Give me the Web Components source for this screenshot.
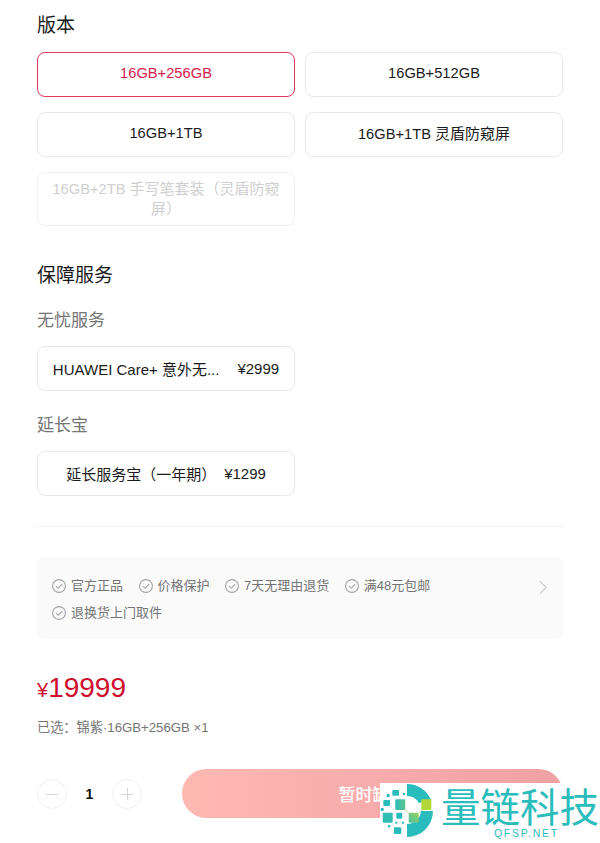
<!DOCTYPE html>
<html lang="zh">
<head>
<meta charset="utf-8">
<title>版本</title>
<style>
  html, body { margin: 0; padding: 0; background: #fff; }
  body {
    width: 600px;
    height: 843px;
    overflow: hidden;
    position: relative;
    font-family: "Liberation Sans", "Noto Sans CJK SC", sans-serif;
    color: #000;
  }
</style>
</head>
<body>
<product-panel></product-panel>
<qfsp-mark></qfsp-mark>

<script>
class OptBtn extends HTMLElement {
   constructor() {
      super();
      this.attachShadow({ mode: 'open' }).innerHTML = `
         <style>
            :host {
               display: block;
               box-sizing: border-box;
               padding: 10px 12px;
               border: 1px solid #e8e8e8;
               border-radius: 8px;
               font-size: 14.7px;
               line-height: 21px;
               text-align: center;
               color: #1a1a1a;
               background: #fff;
            }
            :host([selected]) {
               border-color: #e2395b;
               color: #d6204b;
            }
            :host([disabled]) {
               padding: 6px 12px;
               line-height: 20px;
               border-color: #f1f1f1;
               color: #cfcfcf;
            }
            ::slotted(.cn) { font-size: 15px; }
         </style>
         <slot></slot>
      `;
   }
}
customElements.define('opt-btn', OptBtn);

class ServiceBtn extends HTMLElement {
   constructor() {
      super();
      this.attachShadow({ mode: 'open' }).innerHTML = `
         <style>
            :host {
               display: flex;
               align-items: center;
               justify-content: center;
               box-sizing: border-box;
               width: 258px;
               height: 45px;
               padding: 0 15px;
               gap: var(--svc-gap, 8px);
               border: 1px solid #e8e8e8;
               border-radius: 8px;
               font-size: 15px;
               color: #1a1a1a;
               white-space: nowrap;
            }
         </style>
         <span><slot></slot></span>
         <span><slot name="price"></slot></span>
      `;
   }
}
customElements.define('service-btn', ServiceBtn);

class PromiseItem extends HTMLElement {
   constructor() {
      super();
      this.attachShadow({ mode: 'open' }).innerHTML = `
         <style>
            :host {
               display: inline-flex;
               align-items: center;
               gap: 5px;
               font-size: 13px;
               line-height: 27px;
               color: #757575;
            }
            svg { flex: none; display: block; }
         </style>
         <svg width="14" height="14" viewBox="0 0 14 14" fill="none" stroke="#a4a4a4" stroke-width="1.1">
            <circle cx="7" cy="7" r="6.4"/>
            <path d="M4 7.2 6.2 9.3 10.2 5.2"/>
         </svg>
         <slot></slot>
      `;
   }
}
customElements.define('promise-item', PromiseItem);

class PromiseBox extends HTMLElement {
   constructor() {
      super();
      this.attachShadow({ mode: 'open' }).innerHTML = `
         <style>
            :host {
               display: flex;
               align-items: center;
               box-sizing: border-box;
               height: 82px;
               padding: 0 16px 0 15px;
               background: #fafafa;
               border-radius: 8px;
            }
            .items {
               display: flex;
               flex-wrap: wrap;
               gap: 0 15.5px;
               width: 440px;
               padding-top: 2px;
            }
            .arrow { margin-left: auto; display: block; align-self: flex-start; margin-top: 23px; }
         </style>
         <div class="items"><slot></slot></div>
         <svg class="arrow" width="8" height="15" viewBox="0 0 8 15" fill="none" stroke="#cfcfcf" stroke-width="1.2">
            <path d="M1 1 7 7.5 1 14"/>
         </svg>
      `;
   }
}
customElements.define('promise-box', PromiseBox);

class QtyStepper extends HTMLElement {
   constructor() {
      super();
      this.attachShadow({ mode: 'open' }).innerHTML = `
         <style>
            :host {
               display: flex;
               align-items: center;
               width: 105px;
               justify-content: space-between;
            }
            .round {
               width: 30px;
               height: 30px;
               box-sizing: border-box;
               border: 1px solid #f0f0f0;
               border-radius: 50%;
               display: flex;
               align-items: center;
               justify-content: center;
            }
            .num { font-size: 14px; font-weight: 700; color: #111; }
         </style>
         <div class="round">
            <svg width="12" height="12" viewBox="0 0 12 12" stroke="#d4d4d4"><path d="M0 6.5H12"/></svg>
         </div>
         <span class="num">1</span>
         <div class="round">
            <svg width="12" height="12" viewBox="0 0 12 12" stroke="#d4d4d4"><path d="M0 6.5H12M6.5 0V12"/></svg>
         </div>
      `;
   }
}
customElements.define('qty-stepper', QtyStepper);

class ProductPanel extends HTMLElement {
   constructor() {
      super();
      this.attachShadow({ mode: 'open' }).innerHTML = `
         <style>
            :host {
               display: block;
               padding: 12px 37px 0;
            }
            h2 {
               margin: 0;
               font-size: 19px;
               line-height: 28px;
               font-weight: 400;
               color: #1a1a1a;
            }
            h3 {
               margin: 0;
               font-size: 17px;
               line-height: 24px;
               font-weight: 400;
               color: #757575;
            }
            .cn { font-size: 15px; }
            .grid {
               display: grid;
               grid-template-columns: 258px 258px;
               grid-template-rows: 45px 45px 54px;
               gap: 15px 10px;
               margin-top: 12px;
            }
            .guarantee { margin-top: 36px; }
            .sub1 { margin-top: 19px; }
            .sub2 { margin-top: 23px; }
            service-btn { margin-top: 13px; }
            hr {
               border: 0;
               border-top: 1px solid #f2f2f2;
               margin: 30px 0 30px;
            }
            .price {
               margin-top: 31px;
               color: #ce0e2d;
               font-size: 28px;
               line-height: 36px;
            }
            .price small { font-size: 20px; }
            .picked {
               margin-top: 10px;
               font-size: 13.2px;
               line-height: 20px;
               color: #757575;
            }
            .buy {
               display: flex;
               align-items: center;
               justify-content: space-between;
               margin-top: 31px;
            }
            .buy-btn {
               width: 381px;
               height: 49px;
               border-radius: 25px;
               display: flex;
               align-items: center;
               justify-content: center;
               font-size: 17px;
               font-weight: 500;
               color: #fff;
               background: linear-gradient(90deg, #ffb9b3, #efa0a3);
            }
         </style>
         <h2>版本</h2>
         <div class="grid">
            <opt-btn selected>16GB+256GB</opt-btn>
            <opt-btn>16GB+512GB</opt-btn>
            <opt-btn>16GB+1TB</opt-btn>
            <opt-btn>16GB+1TB <span class="cn">灵盾防窥屏</span></opt-btn>
            <opt-btn disabled>16GB+2TB <span class="cn">手写笔套装（灵盾防窥屏）</span></opt-btn>
         </div>
         <h2 class="guarantee">保障服务</h2>
         <h3 class="sub1">无忧服务</h3>
         <service-btn style="--svc-gap: 18px">HUAWEI Care+ 意外无...<span slot="price">¥2999</span></service-btn>
         <h3 class="sub2">延长宝</h3>
         <service-btn>延长服务宝（一年期）<span slot="price">¥1299</span></service-btn>
         <hr>
         <promise-box>
            <promise-item>官方正品</promise-item>
            <promise-item>价格保护</promise-item>
            <promise-item>7天无理由退货</promise-item>
            <promise-item>满48元包邮</promise-item>
            <promise-item>退换货上门取件</promise-item>
         </promise-box>
         <div class="price"><small>¥</small>19999</div>
         <div class="picked">已选：锦紫·16GB+256GB ×1</div>
         <div class="buy">
            <qty-stepper></qty-stepper>
            <div class="buy-btn">暂时缺货</div>
         </div>
      `;
   }
}
customElements.define('product-panel', ProductPanel);

// watermark sits over the buy button
class QfspMark extends HTMLElement {
   constructor() {
      super();
      this.attachShadow({ mode: 'open' }).innerHTML = `
         <style>
            :host {
               position: absolute;
               left: 380px;
               top: 783px;
               width: 220px;
               height: 60px;
               background: #fff;
               display: flex;
               gap: 6px;
            }
            svg { flex: none; display: block; }
            .txt { color: #2bbcbc; width: 159px; padding-top: 2px; }
            .cn {
               font-family: "Noto Sans CJK SC", sans-serif;
               font-size: 39.5px;
               line-height: 40px;
               white-space: nowrap;
            }
            .en {
               font-size: 10.5px;
               line-height: 11px;
               letter-spacing: 1.7px;
               margin-top: 3px;
               padding-left: 53px;
            }
         </style>
         <svg width="55" height="60" viewBox="0 0 55 60">
            <defs>
               <linearGradient id="g1" x1="0" y1="1" x2="1" y2="0">
                  <stop offset="0" stop-color="#4cc2a0"/>
                  <stop offset="1" stop-color="#9ad15c"/>
               </linearGradient>
               <linearGradient id="g2" x1="0" y1="0" x2="1" y2="0">
                  <stop offset="0" stop-color="#2cbdb8"/>
                  <stop offset="1" stop-color="#5cc58f"/>
               </linearGradient>
            </defs>
            <path d="M27 1A26 26 0 0 1 51 17L39 20A14 14 0 0 0 27 13Z" fill="#29bcbc"/>
            <path d="M53 28A26 26 0 0 1 27 54L27 41A14 14 0 0 0 41 28Z" fill="#29bcbc"/>
            <path d="M25 27 29 30M39 30 42 27" stroke="#b9e29c" stroke-width="1" fill="none"/>
            <rect x="12.3" y="7" width="6.7" height="5.7" rx="1" fill="#29bcbc"/>
            <rect x="6.7" y="11" width="3" height="3" rx=".7" fill="#29bcbc"/>
            <rect x="23" y="10" width="2" height="2" fill="#29bcbc"/>
            <rect x="3.3" y="17" width="6.7" height="6" rx="1" fill="#29bcbc"/>
            <rect x="15.3" y="16.3" width="10" height="10.7" rx="1" fill="url(#g2)"/>
            <rect x=".7" y="25" width="3" height="3" rx=".7" fill="#29bcbc"/>
            <rect x="2.7" y="29.7" width="10" height="10" rx="1" fill="#2fbdb4"/>
            <rect x="16.3" y="29.7" width="6" height="6" rx="1" fill="#29bcbc"/>
            <rect x="28.7" y="29.7" width="10" height="10" rx="1" fill="url(#g1)"/>
            <rect x="41.3" y="16.3" width="10" height="10.7" rx="1" fill="#b3d639"/>
            <rect x="14" y="44.3" width="7.3" height="6.7" rx="1" fill="#29bcbc"/>
            <rect x="8" y="42" width="2.3" height="2.3" fill="#29bcbc"/>
            <rect x="22" y="38.7" width="2" height="2" fill="#29bcbc"/>
            <rect x="15.3" y="38.7" width="2" height="2" fill="#29bcbc"/>
         </svg>
         <div class="txt">
            <div class="cn">量链科技</div>
            <div class="en">QFSP.NET</div>
         </div>
      `;
   }
}
customElements.define('qfsp-mark', QfspMark);
</script>
</body>
</html>
